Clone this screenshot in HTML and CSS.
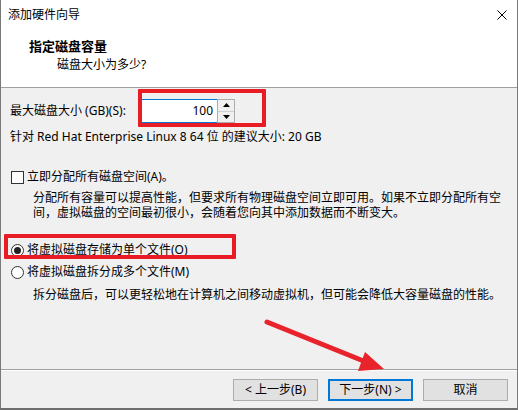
FILE: index.html
```html
<!DOCTYPE html>
<html lang="zh-CN">
<head>
<meta charset="utf-8">
<title>添加硬件向导</title>
<link rel="stylesheet" href="styles.css">
</head>
<body>
<div class="window">
  <div class="top">
    <div class="titlebar">
      <span class="title">添加硬件向导</span>
      <svg class="close" viewBox="0 0 10 10" width="10" height="10"><path d="M0.5 0.5 L9.5 9.5 M9.5 0.5 L0.5 9.5" stroke="#000" stroke-width="1" fill="none"/></svg>
    </div>
    <div class="header">
      <div class="h-title">指定磁盘容量</div>
      <div class="h-sub">磁盘大小为多少?</div>
    </div>
  </div>
  <div class="body">
    <div class="size-row">
      <span class="size-label">最大磁盘大小 (GB)(S):</span>
      <div class="spin-input">100</div>
      <div class="spin-btns">
        <span class="spin-btn"><svg viewBox="0 0 7 4" width="7" height="4"><path d="M3.5 0 L7 4 L0 4 Z" fill="#000"/></svg></span>
        <span class="spin-btn"><svg viewBox="0 0 7 4" width="7" height="4"><path d="M0 0 L7 0 L3.5 4 Z" fill="#000"/></svg></span>
      </div>
    </div>
    <div class="recommend">针对 Red Hat Enterprise Linux 8 64 位 的建议大小: 20 GB</div>
    <div class="check-row"><span class="checkbox"></span><span>立即分配所有磁盘空间(A)。</span></div>
    <p class="desc">分配所有容量可以提高性能，但要求所有物理磁盘空间立即可用。如果不立即分配所有空间，虚拟磁盘的空间最初很小，会随着您向其中添加数据而不断变大。</p>
    <div class="radio-row radio-first"><span class="radio checked"></span><span>将虚拟磁盘存储为单个文件(O)</span></div>
    <div class="radio-row radio-second"><span class="radio"></span><span>将虚拟磁盘拆分成多个文件(M)</span></div>
    <p class="desc desc2">拆分磁盘后，可以更轻松地在计算机之间移动虚拟机，但可能会降低大容量磁盘的性能。</p>
  </div>
  <div class="footer">
    <button class="btn">&lt; 上一步(B)</button>
    <button class="btn btn-default">下一步(N) &gt;</button>
    <button class="btn">取消</button>
  </div>
  <div class="mark mark-size"></div>
  <div class="mark mark-radio"></div>
  <svg class="arrow" viewBox="0 0 518 410" width="518" height="410">
    <line x1="267" y1="322" x2="366" y2="362" stroke="#e8232b" stroke-width="5" stroke-linecap="round"/>
    <polygon points="365,352 358,371 384,369" fill="#e8232b"/>
  </svg>
</div>
</body>
</html>
```
FILE: styles.css
```css
* { box-sizing: border-box; margin: 0; padding: 0; }
html, body { width: 518px; height: 410px; overflow: hidden; background: #fff; }
body {
  font-family: "Noto Sans", "Noto Sans CJK SC", sans-serif;
  font-size: 12px;
  color: #000;
}
.window {
  position: relative;
  width: 518px;
  height: 410px;
  display: flex;
  flex-direction: column;
  background: #f0f0f0;
  border-left: 1px solid #7a7a7a;
  border-right: 1px solid #7a7a7a;
  border-bottom: 2px solid #6e6e6e;
}
.top {
  flex: none;
  height: 88px;
  background: #fff;
  border-bottom: 1px solid #a0a0a0;
}
.titlebar {
  height: 30px;
  display: flex;
  align-items: center;
  justify-content: space-between;
  padding: 0 10px 0 7px;
}
.title { line-height: 16px; }
.close { display: block; }
.header { padding-top: 7px; }
.h-title {
  font-weight: bold;
  font-size: 13px;
  line-height: 18px;
  padding-left: 28px;
}
.h-sub {
  line-height: 16px;
  padding-left: 56px;
  margin-top: 2px;
}
.body {
  flex: 1;
  padding: 11px 9px 0 9px;
}
.size-row {
  display: flex;
  align-items: center;
  height: 24px;
}
.size-label { width: 131px; line-height: 16px; }
.spin-input {
  width: 76px;
  height: 24px;
  background: #fff;
  border-top: 1px solid #0078d7;
  border-bottom: 1px solid #0078d7;
  text-align: right;
  padding-right: 4px;
  line-height: 22px;
}
.spin-btns {
  width: 18px;
  height: 24px;
  display: flex;
  flex-direction: column;
  border: 1px solid #adadad;
  background: #f0f0f0;
}
.spin-btn {
  flex: 1;
  display: flex;
  align-items: center;
  justify-content: center;
}
.spin-btn + .spin-btn { border-top: 1px solid #cfcfcf; }
.spin-btn svg { display: block; }
.recommend { margin-top: 6px; line-height: 16px; }
.check-row, .radio-row {
  display: flex;
  align-items: center;
  height: 16px;
  line-height: 16px;
  padding-left: 1px;
}
.check-row { margin-top: 24px; }
.checkbox {
  width: 13px;
  height: 13px;
  border: 1px solid #333;
  background: #fff;
  margin-right: 3px;
}
.desc {
  margin-top: 5px;
  padding-left: 23px;
  width: 494px;
  line-height: 15px;
}
.radio-first { margin-top: 22px; }
.radio-second { margin-top: 6px; }
.radio {
  position: relative;
  width: 13px;
  height: 13px;
  border: 1px solid #333;
  border-radius: 50%;
  background: #fff;
  margin-right: 3px;
}
.radio.checked::after {
  content: "";
  position: absolute;
  left: 2px;
  top: 2px;
  width: 7px;
  height: 7px;
  border-radius: 50%;
  background: #222;
}
.desc2 { margin-top: 7px; line-height: 16px; }
.footer {
  flex: none;
  height: 39px;
  border-top: 1px solid #a0a0a0;
  box-shadow: inset 0 1px 0 #fff;
  display: flex;
  justify-content: flex-end;
  align-items: flex-start;
  gap: 10px;
  padding: 9px 9px 0 0;
}
.btn {
  width: 85px;
  height: 22px;
  border: 1px solid #adadad;
  background: #e1e1e1;
  font-family: inherit;
  font-size: 12px;
  line-height: 18px;
  color: #000;
}
.btn-default { border: 2px solid #0078d7; }
.mark {
  position: absolute;
  border: 4px solid #e81c24;
  border-radius: 1px;
}
.mark-size { left: 137px; top: 89px; width: 128px; height: 38px; }
.mark-radio { left: 3px; top: 234px; width: 232px; height: 25px; }
.arrow {
  position: absolute;
  left: -1px;
  top: 0;
  pointer-events: none;
}
```
